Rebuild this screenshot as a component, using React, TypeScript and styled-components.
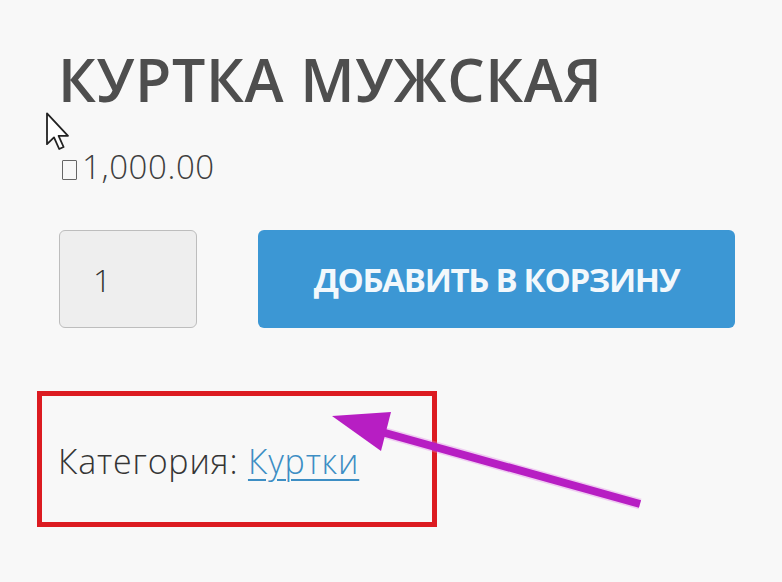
import React from "react";
import styled, { createGlobalStyle } from "styled-components";

const Global = createGlobalStyle`
  html, body { margin: 0; padding: 0; background: #f8f8f8; }
  body { font-family: "Open Sans", "Liberation Sans", sans-serif; }
`;

const Page = styled.div`
  position: relative;
  width: 782px;
  height: 582px;
  overflow: hidden;
  background: #f8f8f8;
  box-sizing: border-box;
  padding: 44px 0 0 56px;
  display: flex;
  flex-direction: column;
  align-items: flex-start;
`;

const Title = styled.h1`
  margin: 0 0 0 2px;
  font-size: 59px;
  line-height: 70px;
  font-weight: 600;
  color: #4e4e4e;
  letter-spacing: 0.7px;
  text-transform: uppercase;
`;

const Price = styled.div`
  margin-top: 33px;
  font-size: 33px;
  line-height: 40px;
  font-weight: 300;
  color: #3e3e3e;
  letter-spacing: 0.6px;
  display: flex;
  align-items: baseline;
`;

const Tofu = styled.span`
  display: inline-block;
  box-sizing: border-box;
  width: 15px;
  height: 20px;
  border: 1.5px solid #666;
  border-radius: 1px;
  margin: 0 5px 0 6px;
  transform: translateY(1px);
`;

const Row = styled.div`
  margin-top: 43px;
  display: flex;
  gap: 61px;
  margin-left: 3px;
`;

const Qty = styled.input`
  box-sizing: border-box;
  width: 138px;
  height: 98px;
  border: 1px solid #bdbdbd;
  border-radius: 6px;
  background: #eeeeee;
  padding: 0 0 0 33px;
  font-family: "Open Sans", "Liberation Sans", sans-serif;
  font-size: 32px;
  font-weight: 300;
  color: #333;
  outline: none;
`;

const CartButton = styled.button`
  box-sizing: border-box;
  width: 477px;
  height: 98px;
  border: none;
  border-radius: 6px;
  background: #3c97d4;
  color: #f2f8fc;
  font-family: "Open Sans", "Liberation Sans", sans-serif;
  font-size: 33px;
  font-weight: 700;
  letter-spacing: -1.3px;
  text-transform: uppercase;
  display: flex;
  align-items: center;
  justify-content: center;
  padding: 0;
`;

const Highlight = styled.div`
  margin-top: 63px;
  margin-left: -19px;
  box-sizing: border-box;
  width: 400px;
  height: 136px;
  border: 5px solid #dc1b21;
  padding: 45px 0 0 16px;
  font-size: 34px;
  line-height: 40px;
  font-weight: 300;
  letter-spacing: 0.8px;
  color: #353535;
`;

const CategoryLink = styled.a`
  color: #3d8ec4;
  text-decoration: underline;
  text-decoration-thickness: 1.5px;
  text-underline-offset: 5px;
`;

const Cursor = styled.svg`
  position: absolute;
  left: 44px;
  top: 111px;
`;

const Annotation = styled.svg`
  position: absolute;
  left: 0;
  top: 0;
  pointer-events: none;
`;

export default function App() {
  return (
    <>
      <Global />
      <Page>
        <Title>Куртка мужская</Title>
        <Price>
          <Tofu />
          1,000.00
        </Price>
        <Row>
          <Qty type="text" defaultValue="1" readOnly />
          <CartButton>Добавить в корзину</CartButton>
        </Row>
        <Highlight>
          Категория: <CategoryLink href="#">Куртки</CategoryLink>
        </Highlight>
        <Cursor width="28" height="40" viewBox="0 0 14 20">
          <path
            d="M1.5 1.2 L1.5 16.6 L5 13.2 L7.6 19 L9.8 18 L7.3 12.4 L12 12.4 Z"
            fill="#ffffff"
            stroke="#222"
            strokeWidth="0.9"
            strokeLinejoin="round"
          />
        </Cursor>
        <Annotation width="782" height="582" viewBox="0 0 782 582">
          <line
            x1="640"
            y1="504"
            x2="378"
            y2="431"
            stroke="#e07be6"
            strokeWidth="11"
            strokeOpacity="0.35"
            strokeLinecap="butt"
          />
          <line
            x1="640"
            y1="504"
            x2="378"
            y2="431"
            stroke="#b71ec3"
            strokeWidth="8"
            strokeLinecap="butt"
          />
          <polygon points="332,416 391,412 381,451" fill="#b71ec3" />
        </Annotation>
      </Page>
    </>
  );
}
